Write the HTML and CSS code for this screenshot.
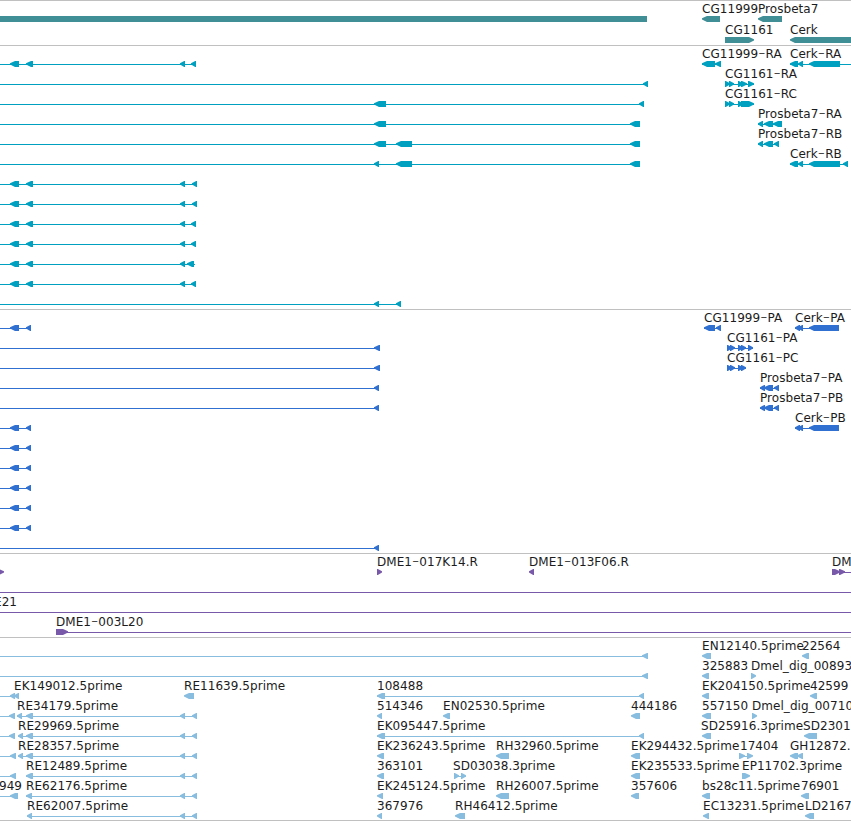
FILE: index.html
```html
<!DOCTYPE html>
<html lang="en">
<head>
<meta charset="utf-8">
<title>Genome tracks</title>
<link rel="stylesheet" href="styles.css">
</head>
<body>
<main class="browser">
  <section class="track genes" data-track="genes"></section>
  <section class="track transcripts" data-track="transcripts"></section>
  <section class="track proteins" data-track="proteins"></section>
  <section class="track clones" data-track="clones"></section>
  <section class="track ests" data-track="ests"></section>
</main>
<script src="tracks.js"></script>
</body>
</html>
```
FILE: styles.css
```css
body {
  margin: 0;
  background: #fff;
}

.browser {
  display: flex;
  flex-direction: column;
  width: 851px;
  height: 820px;
  overflow: hidden;
  border-bottom: 1px solid #c0c0c0;
}

.track {
  box-sizing: border-box;
  flex: none;
  border-top: 1px solid #c0c0c0;
}

.genes { height: 45px; color: #408e96; }
.transcripts { height: 264px; color: #00a0c0; }
.proteins { height: 244px; color: #3070d0; }
.clones { height: 84px; color: #7858a8; }
.ests { height: 183px; color: #88bde0; }

.row {
  display: block;
  width: 851px;
  height: 20px;
  overflow: visible;
}

.genes .row { height: 21px; }

.transcripts .row:first-child,
.proteins .row:first-child,
.clones .row:first-child,
.ests .row:first-child { margin-top: 1px; }

.shape { fill: currentColor; }

.label {
  fill: #1c1c1c;
  font: 12px "DejaVu Sans", "Liberation Sans", sans-serif;
  letter-spacing: 0.05px;
  white-space: pre;
}

.dash {
  font-family: "DejaVu Sans Light", "DejaVu Sans", sans-serif;
  font-size: 20px;
  font-weight: 200;
}
```
FILE: tracks.js
```js
// Each row is a list of groups: [label, labelX, lineStart, lineEnd, features].
// A feature is "start-end" plus a direction: < left, > right, = plain bar.
const cds = [null, 0, 0, 31, "10-19< 26-31<"];
const tail = (end, feats) => [null, 0, 0, end, feats];

const tracks = {
  genes: [
    [[null, 0, 0, 0, "0-647="], ["CG11999", 702, 0, 0, "702-720<"], ["Prosbeta7", 758, 0, 0, "758-782<"]],
    [["CG1161", 725, 0, 0, "725-754>"], ["Cerk", 790, 0, 0, "790-860<"]]
  ],
  transcripts: [
    [tail(196, "10-19< 26-33< 180-185< 191-196<"), ["CG11999-RA", 702, 702, 721, "702-715< 715-721<"], ["Cerk-RA", 790, 790, 851, "790-798< 798-803< 809-840<"]],
    [tail(648, "643-648<"), ["CG1161-RA", 725, 725, 754, "725-730> 729-734> 738-743> 741-747> 748-754>"]],
    [tail(644, "374-386< 639-644<"), ["CG1161-RC", 725, 725, 754, "725-730> 729-734> 738-743> 741-754>"]],
    [tail(640, "374-386< 630-640<"), ["Prosbeta7-RA", 758, 758, 782, "758-763< 764-773< 773-782<"]],
    [tail(640, "374-386< 396-412< 630-640<"), ["Prosbeta7-RB", 758, 758, 779, "758-763< 764-773< 774-779<"]],
    [tail(640, "374-379< 396-412< 630-640<"), ["Cerk-RB", 790, 790, 848, "790-798< 798-803< 809-840< 843-848<"]],
    [tail(197, "10-19< 26-33< 180-185< 192-197<")],
    [tail(197, "10-19< 26-33< 180-185< 192-197<")],
    [tail(196, "10-19< 26-33< 180-185< 191-196<")],
    [tail(196, "10-19< 26-33< 180-185< 191-196<")],
    [tail(195, "10-19< 26-33< 180-185< 187-194<")],
    [tail(196, "10-19< 26-33< 180-185< 191-196<")],
    [tail(401, "374-379< 396-401<")]
  ],
  proteins: [
    [cds, ["CG11999-PA", 704, 704, 721, "704-715< 716-721<"], ["Cerk-PA", 795, 795, 839, "795-800< 798-803< 809-839<"]],
    [tail(380, "374-380<"), ["CG1161-PA", 727, 727, 753, "727-732> 730-735> 738-743> 741-746> 748-753>"]],
    [tail(380, "374-380<"), ["CG1161-PC", 727, 727, 746, "727-732> 730-735> 738-743> 741-746>"]],
    [tail(379, "374-379<"), ["Prosbeta7-PA", 760, 760, 779, "760-765< 764-773< 774-779<"]],
    [tail(379, "374-379<"), ["Prosbeta7-PB", 760, 760, 779, "760-765< 764-773< 774-779<"]],
    [cds, ["Cerk-PB", 795, 795, 839, "795-800< 798-803< 809-839<"]],
    [cds], [cds], [cds], [cds], [cds],
    [tail(379, "374-379<")]
  ],
  clones: [
    [[null, 0, 0, 0, "-6-4>"], ["DME1-017K14.R", 377, 0, 0, "377-382>"], ["DME1-013F06.R", 529, 0, 0, "529-534<"], ["DM", 832, 832, 851, "832-840> 839-845>"]],
    [tail(851, "")],
    [["E21", -6, 0, 851, ""]],
    [["DME1-003L20", 56, 56, 851, "56-68>"]]
  ],
  ests: [
    [tail(648, "642-648<"), ["EN12140.5prime", 702, 0, 0, "702-711<"], ["22564", 802, 0, 0, "802-809<"]],
    [tail(648, "642-648<"), ["325883", 702, 0, 0, "702-709<"], ["Dmel_dig_00893", 751, 0, 0, "751-756>"]],
    [["EK149012.5prime", 14, 0, 19, "10-15< 14-19<"], ["RE11639.5prime", 184, 0, 0, "184-194<"], ["108488", 377, 377, 644, "377-385< 639-644<"], ["EK204150.5prime", 702, 0, 0, "702-709<"], ["42599", 810, 0, 0, "810-817<"]],
    [tail(15, "9-15<"), ["RE34179.5prime", 17, 17, 197, "17-22< 26-33< 180-185< 192-197<"], ["514346", 377, 0, 0, "377-382<"], ["EN02530.5prime", 443, 0, 0, "443-450<"], ["444186", 631, 0, 0, "631-640<"], ["557150", 702, 0, 0, "702-711<"], ["Dmel_dig_00710", 752, 0, 0, "752-757>"]],
    [tail(15, "9-15<"), ["RE29969.5prime", 18, 18, 197, "18-23< 26-33< 180-185< 192-197<"], ["EK095447.5prime", 377, 377, 644, "377-385< 639-644<"], ["SD25916.3prime", 701, 0, 0, "702-711<"], ["SD2301", 803, 0, 0, "804-817<"]],
    [tail(16, "10-16<"), ["RE28357.5prime", 18, 18, 197, "18-23< 26-33< 180-185< 192-197<"], ["EK236243.5prime", 377, 0, 0, "377-384<"], ["RH32960.5prime", 496, 0, 0, "496-509<"], ["EK294432.5prime", 631, 0, 0, "631-640<"], ["17404", 740, 739, 752, "739-745> 747-753>"], ["GH12872.", 790, 0, 0, "790-798< 797-803<"]],
    [tail(16, "10-16<"), ["RE12489.5prime", 26, 26, 197, "26-33< 180-185< 192-197<"], ["363101", 377, 0, 0, "377-384<"], ["SD03038.3prime", 453, 454, 466, "454-459> 461-466>"], ["EK235533.5prime", 631, 0, 0, "631-640<"], ["EP11702.3prime", 742, 0, 0, "742-750>"]],
    [["949", -1, 0, 18, "10-18<"], ["RE62176.5prime", 26, 26, 197, "26-32< 180-185< 192-197<"], ["EK245124.5prime", 377, 0, 0, "377-383<"], ["RH26007.5prime", 496, 0, 0, "496-509<"], ["357606", 631, 0, 0, "631-639<"], ["bs28c11.5prime", 702, 0, 0, "702-710<"], ["76901", 801, 0, 0, "801-809<"]],
    [["RE62007.5prime", 27, 27, 197, "27-32< 180-185< 192-197<"], ["367976", 377, 0, 0, "377-382<"], ["RH46412.5prime", 455, 0, 0, "455-465<"], ["EC13231.5prime", 703, 0, 0, "703-709<"], ["LD2167", 805, 0, 0, "805-814<"]]
  ]
};

function shape(spec, top) {
  const m = spec.match(/^(-?\d+)-(\d+)([<>=])$/);
  const a = +m[1], b = +m[2], mid = top + 2.8, bot = top + 6;
  if (m[3] === "=") return `<path class="shape" d="M${a} ${top}H${b}V${bot}H${a}Z"/>`;
  const s = m[3] === "<" ? 1 : -1;
  const tip = s > 0 ? a : b, end = s > 0 ? b : a;
  const neck = tip + s * Math.min(5, b - a - 0.8);
  return `<path class="shape" d="M${tip} ${mid - 0.5}L${neck} ${top}H${end}V${bot}H${neck}L${tip} ${mid + 0.6}Z"/>`;
}

// The dash is set larger and lighter than the rest, so it is lowered to mid-digit height.
function labelText(text) {
  const [head, rest] = text.split("-");
  return rest ? `${head}<tspan class="dash" dy="1.3">-</tspan><tspan dy="-1.3">${rest}</tspan>` : head;
}

function drawRow(groups, top) {
  let out = "";
  for (const [label, x, from, to, feats] of groups) {
    if (to > from) out += `<rect class="shape" x="${from}" y="${top + 3}" width="${to - from}" height="1"/>`;
    for (const f of feats.split(" ").filter(Boolean)) out += shape(f, top);
    if (label) out += `<text class="label" x="${x}" y="${top - 3}">${labelText(label)}</text>`;
  }
  return `<svg class="row">${out}</svg>`;
}

for (const el of document.querySelectorAll(".track")) {
  const top = el.dataset.track === "genes" ? 15 : 14;
  el.innerHTML = tracks[el.dataset.track].map(r => drawRow(r, top)).join("");
}
```
